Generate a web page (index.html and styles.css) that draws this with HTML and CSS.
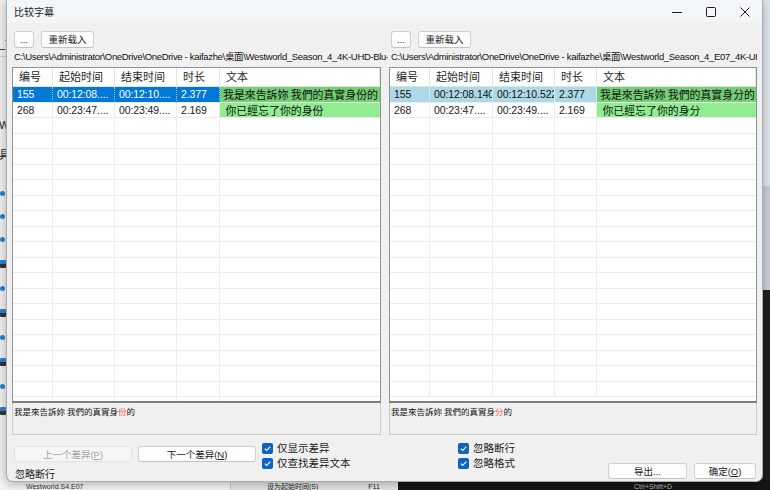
FILE: index.html
```html
<!DOCTYPE html>
<html lang="zh-CN">
<head>
<meta charset="utf-8">
<title>比较字幕</title>
<link rel="stylesheet" href="styles.css">
</head>
<body>
<div class="bg-left">
  <div class="bg-frag t1">_T</div>
  <div class="bg-sep"></div>
  <div class="bg-frag t2">W</div>
  <div class="bg-frag t3">具</div>
  <div class="bg-ico"></div>
  <div class="bg-ico"></div>
  <div class="bg-ico"></div>
  <div class="bg-ico st"></div>
  <div class="bg-ico"></div>
  <div class="bg-ico st"></div>
  <div class="bg-ico"></div>
  <div class="bg-ico st"></div>
  <div class="bg-ico"></div>
  <div class="bg-ico st"></div>
</div>
<div class="bg-right"></div>
<div class="bg-bottom">
  <div class="bb1">Westworld.S4.E07</div>
  <div class="bb2"><span>设为起始时间(S)</span><span class="f11">F11</span></div>
  <div class="bb3"><span>Ctrl+Shift+D</span></div>
</div>

<div class="win">
  <div class="titlebar">
    <div class="title">比较字幕</div>
    <div class="controls">
      <div class="ctl"><svg width="10" height="10" viewBox="0 0 10 10"><path d="M0 5.5h10" stroke="#1b1b1b" stroke-width="1"/></svg></div>
      <div class="ctl"><svg width="10" height="10" viewBox="0 0 10 10"><rect x="0.5" y="0.5" width="9" height="9" rx="1" fill="none" stroke="#1b1b1b" stroke-width="1"/></svg></div>
      <div class="ctl"><svg width="10" height="10" viewBox="0 0 10 10"><path d="M0.5 0.5L9.5 9.5M9.5 0.5L0.5 9.5" stroke="#1b1b1b" stroke-width="1"/></svg></div>
    </div>
  </div>

  <div class="panes">
    <div class="pane">
      <div class="toolbar">
        <button class="btn dots">...</button>
        <button class="btn reload">重新载入</button>
      </div>
      <div class="path">C:\Users\Administrator\OneDrive\OneDrive - kaifazhe\桌面\Westworld_Season_4_4K-UHD-Blu-ray_</div>
      <div class="table left">
        <div class="row head">
          <div class="c">编号</div><div class="c">起始时间</div><div class="c">结束时间</div><div class="c">时长</div><div class="c">文本</div>
        </div>
        <div class="row sel-focus">
          <div class="c n">155</div><div class="c n">00:12:08....</div><div class="c n">00:12:10....</div><div class="c n">2.377</div><div class="c t diff1">我是來告訴妳 我們的真實身份的</div>
        </div>
        <div class="row">
          <div class="c n">268</div><div class="c n">00:23:47....</div><div class="c n">00:23:49....</div><div class="c n">2.169</div><div class="c t diff2">&nbsp;你已經忘了你的身份</div>
        </div>
        <div class="row"><div class="c"></div><div class="c"></div><div class="c"></div><div class="c"></div><div class="c"></div></div>
        <div class="row"><div class="c"></div><div class="c"></div><div class="c"></div><div class="c"></div><div class="c"></div></div>
        <div class="row"><div class="c"></div><div class="c"></div><div class="c"></div><div class="c"></div><div class="c"></div></div>
        <div class="row"><div class="c"></div><div class="c"></div><div class="c"></div><div class="c"></div><div class="c"></div></div>
        <div class="row"><div class="c"></div><div class="c"></div><div class="c"></div><div class="c"></div><div class="c"></div></div>
        <div class="row"><div class="c"></div><div class="c"></div><div class="c"></div><div class="c"></div><div class="c"></div></div>
        <div class="row"><div class="c"></div><div class="c"></div><div class="c"></div><div class="c"></div><div class="c"></div></div>
        <div class="row"><div class="c"></div><div class="c"></div><div class="c"></div><div class="c"></div><div class="c"></div></div>
        <div class="row"><div class="c"></div><div class="c"></div><div class="c"></div><div class="c"></div><div class="c"></div></div>
        <div class="row"><div class="c"></div><div class="c"></div><div class="c"></div><div class="c"></div><div class="c"></div></div>
        <div class="row"><div class="c"></div><div class="c"></div><div class="c"></div><div class="c"></div><div class="c"></div></div>
        <div class="row"><div class="c"></div><div class="c"></div><div class="c"></div><div class="c"></div><div class="c"></div></div>
        <div class="row"><div class="c"></div><div class="c"></div><div class="c"></div><div class="c"></div><div class="c"></div></div>
        <div class="row"><div class="c"></div><div class="c"></div><div class="c"></div><div class="c"></div><div class="c"></div></div>
        <div class="row"><div class="c"></div><div class="c"></div><div class="c"></div><div class="c"></div><div class="c"></div></div>
        <div class="row"><div class="c"></div><div class="c"></div><div class="c"></div><div class="c"></div><div class="c"></div></div>
        <div class="row"><div class="c"></div><div class="c"></div><div class="c"></div><div class="c"></div><div class="c"></div></div>
        <div class="row"><div class="c"></div><div class="c"></div><div class="c"></div><div class="c"></div><div class="c"></div></div>
        <div class="row"><div class="c"></div><div class="c"></div><div class="c"></div><div class="c"></div><div class="c"></div></div>
      </div>
      <div class="preview">我是來告訴妳 我們的真實身<span class="red">份</span>的</div>
    </div>

    <div class="pane">
      <div class="toolbar">
        <button class="btn dots">...</button>
        <button class="btn reload">重新载入</button>
      </div>
      <div class="path">C:\Users\Administrator\OneDrive\OneDrive - kaifazhe\桌面\Westworld_Season_4_E07_4K-UHD-Blu</div>
      <div class="table right">
        <div class="row head">
          <div class="c">编号</div><div class="c">起始时间</div><div class="c">结束时间</div><div class="c">时长</div><div class="c">文本</div>
        </div>
        <div class="row sel-blur">
          <div class="c n">155</div><div class="c n clip">00:12:08.140</div><div class="c n clip">00:12:10.522</div><div class="c n">2.377</div><div class="c t diff1">我是來告訴妳 我們的真實身分的</div>
        </div>
        <div class="row">
          <div class="c n">268</div><div class="c n">00:23:47....</div><div class="c n">00:23:49....</div><div class="c n">2.169</div><div class="c t diff2">&nbsp;你已經忘了你的身分</div>
        </div>
        <div class="row"><div class="c"></div><div class="c"></div><div class="c"></div><div class="c"></div><div class="c"></div></div>
        <div class="row"><div class="c"></div><div class="c"></div><div class="c"></div><div class="c"></div><div class="c"></div></div>
        <div class="row"><div class="c"></div><div class="c"></div><div class="c"></div><div class="c"></div><div class="c"></div></div>
        <div class="row"><div class="c"></div><div class="c"></div><div class="c"></div><div class="c"></div><div class="c"></div></div>
        <div class="row"><div class="c"></div><div class="c"></div><div class="c"></div><div class="c"></div><div class="c"></div></div>
        <div class="row"><div class="c"></div><div class="c"></div><div class="c"></div><div class="c"></div><div class="c"></div></div>
        <div class="row"><div class="c"></div><div class="c"></div><div class="c"></div><div class="c"></div><div class="c"></div></div>
        <div class="row"><div class="c"></div><div class="c"></div><div class="c"></div><div class="c"></div><div class="c"></div></div>
        <div class="row"><div class="c"></div><div class="c"></div><div class="c"></div><div class="c"></div><div class="c"></div></div>
        <div class="row"><div class="c"></div><div class="c"></div><div class="c"></div><div class="c"></div><div class="c"></div></div>
        <div class="row"><div class="c"></div><div class="c"></div><div class="c"></div><div class="c"></div><div class="c"></div></div>
        <div class="row"><div class="c"></div><div class="c"></div><div class="c"></div><div class="c"></div><div class="c"></div></div>
        <div class="row"><div class="c"></div><div class="c"></div><div class="c"></div><div class="c"></div><div class="c"></div></div>
        <div class="row"><div class="c"></div><div class="c"></div><div class="c"></div><div class="c"></div><div class="c"></div></div>
        <div class="row"><div class="c"></div><div class="c"></div><div class="c"></div><div class="c"></div><div class="c"></div></div>
        <div class="row"><div class="c"></div><div class="c"></div><div class="c"></div><div class="c"></div><div class="c"></div></div>
        <div class="row"><div class="c"></div><div class="c"></div><div class="c"></div><div class="c"></div><div class="c"></div></div>
        <div class="row"><div class="c"></div><div class="c"></div><div class="c"></div><div class="c"></div><div class="c"></div></div>
      </div>
      <div class="preview">我是來告訴妳 我們的真實身<span class="red">分</span>的</div>
    </div>
  </div>

  <div class="footer">
    <div class="fcol-a">
      <div class="nav">
        <button class="btn nav-btn" disabled>上一个差异(<u>P</u>)</button>
        <button class="btn nav-btn">下一个差异(<u>N</u>)</button>
      </div>
      <div class="flabel">忽略断行</div>
    </div>
    <div class="fcol-b">
      <label class="chk"><span class="box"><svg width="9" height="9" viewBox="0 0 9 9"><path d="M1.8 4.6L3.7 6.4L7.3 2.6" fill="none" stroke="#fff" stroke-width="1.1"/></svg></span>仅显示差异</label>
      <label class="chk"><span class="box"><svg width="9" height="9" viewBox="0 0 9 9"><path d="M1.8 4.6L3.7 6.4L7.3 2.6" fill="none" stroke="#fff" stroke-width="1.1"/></svg></span>仅查找差异文本</label>
    </div>
    <div class="fcol-c">
      <label class="chk"><span class="box"><svg width="9" height="9" viewBox="0 0 9 9"><path d="M1.8 4.6L3.7 6.4L7.3 2.6" fill="none" stroke="#fff" stroke-width="1.1"/></svg></span>忽略断行</label>
      <label class="chk"><span class="box"><svg width="9" height="9" viewBox="0 0 9 9"><path d="M1.8 4.6L3.7 6.4L7.3 2.6" fill="none" stroke="#fff" stroke-width="1.1"/></svg></span>忽略格式</label>
    </div>
    <div class="fcol-d">
      <button class="btn export">导出...</button>
      <button class="btn ok">确定(<u>O</u>)</button>
    </div>
  </div>
</div>
</body>
</html>
```
FILE: styles.css
```css
* { box-sizing: border-box; }
html, body {
  margin: 0;
  width: 770px;
  height: 490px;
  overflow: hidden;
}
body {
  position: relative;
  background: #dde3ea;
  font-family: "Liberation Sans", "Noto Sans CJK SC", sans-serif;
  color: #1a1a1a;
}

/* ---------- background application ---------- */
.bg-left {
  position: absolute;
  left: 0; top: 0;
  width: 12px; height: 490px;
  background: #eeeeee;
  border-right: 1px solid #d6d6d6;
  display: flex;
  flex-direction: column;
  align-items: flex-start;
  padding-top: 38px;
}
.bg-frag { font-size: 11px; line-height: 12px; color: #222; margin-left: -1px; }
.bg-frag.t1 { margin-bottom: 6px; }
.bg-sep { width: 12px; height: 1px; background: #cfcfcf; margin-bottom: 62px; }
.bg-frag.t2 { margin-bottom: 18px; }
.bg-frag.t3 { margin-bottom: 30px; }
.bg-ico {
  width: 5px; height: 5px;
  border-radius: 50%;
  background: #2a7fd4;
  margin-bottom: 18px;
}
.bg-ico.st {
  width: 6px; height: 8px; border-radius: 1px;
  background: linear-gradient(#2a7fd4 0 4px, #333 4px);
}
.bg-right {
  position: absolute;
  right: 0; top: 0;
  width: 12px; height: 490px;
  background: linear-gradient(#dfe5ec 0 186px, #c9ced4 186px 290px, #1e1e1e 290px);
}
.bg-bottom {
  position: absolute;
  left: 0; bottom: 0;
  width: 770px; height: 10px;
  display: flex;
  font-size: 7px;
  line-height: 7px;
}
.bb1 { width: 230px; background: #f2f2f2; padding: 3px 0 0 26px; color: #333; overflow: hidden; white-space: nowrap; }
.bb2 { width: 168px; background: #e4e4e4; border-left: 1px solid #ccc; padding: 3px 0 0 36px; display: flex; gap: 50px; color: #222; white-space: nowrap; overflow: hidden; }
.bb3 { flex: 1; background: #151515; color: #bbb; padding: 3px 0 0 236px; white-space: nowrap; overflow: hidden; }

/* ---------- dialog window ---------- */
.win {
  position: absolute;
  left: 6px; top: 0;
  width: 757px; height: 482px;
  background: #f0f0f0;
  border: 1px solid #a9adb3;
  border-top: none;
  border-radius: 0 0 7px 7px;
  box-shadow: 0 2px 10px rgba(0,0,0,0.28);
  display: flex;
  flex-direction: column;
  overflow: hidden;
}
.titlebar {
  height: 23px;
  flex: none;
  background: #f3f6f9;
  display: flex;
  align-items: center;
}
.title {
  padding-left: 7px;
  font-size: 10px;
  color: #1a1a1a;
  flex: 1;
}
.controls { display: flex; height: 23px; margin-right: 0; }
.ctl {
  width: 34px;
  display: flex;
  align-items: center;
  justify-content: center;
}

/* ---------- panes ---------- */
.panes {
  display: flex;
  gap: 8px;
  padding: 0 5px 0 5px;
  flex: none;
}
.pane {
  display: flex;
  flex-direction: column;
}
.pane:first-child { width: 369px; }
.pane:last-child { width: 369px; }

.toolbar {
  display: flex;
  gap: 7px;
  margin: 8px 0 0 2px;
  height: 17px;
}
.btn {
  font-family: "Liberation Sans", "Noto Sans CJK SC", sans-serif;
  font-size: 9.5px;
  color: #1a1a1a;
  background: #fdfdfd;
  border: 1px solid #d0d0d0;
  border-bottom-color: #c2c2c2;
  border-radius: 3px;
  padding: 0;
  height: 17px;
  line-height: 14px;
  text-align: center;
}
.btn u { text-decoration: underline; }
.btn.dots { width: 20px; }
.btn.reload { width: 53px; }

.path {
  margin: 3px 0 0 2px;
  width: 374px;
  height: 12px;
  font-size: 9.5px;
  line-height: 12px;
  letter-spacing: -0.32px;
  white-space: nowrap;
  overflow: hidden;
  color: #111;
}
.pane:last-child .path { width: 366px; }

.table {
  margin-top: 4px;
  height: 336px;
  background: #ffffff;
  border: 1px solid #8e9297;
  border-bottom: 2px solid #7d8086;
  overflow: hidden;
}
.row {
  display: grid;
  height: 15.5px;
}
.table.left .row { grid-template-columns: 40px 62px 62px 43px 1fr; }
.table.right .row { grid-template-columns: 40px 63px 62px 42px 1fr; }
.c {
  border-right: 1px solid #ececec;
  border-bottom: 1px solid #ececec;
  overflow: hidden;
  white-space: nowrap;
  padding-left: 4px;
  font-size: 10px;
  line-height: 14px;
}
.c:last-child { border-right: none; }
.row.head { height: 19px; }
.row.head .c {
  font-size: 11px;
  line-height: 18px;
  padding-left: 6px;
  color: #1f1f1f;
  border-right: 1px solid #e3e3e3;
  border-bottom: 1px solid #e3e3e3;
}
.c.n { font-size: 10.5px; letter-spacing: -0.1px; padding-left: 4px; }
.c.t {
  font-family: "Noto Sans CJK TC", "Noto Sans CJK SC", sans-serif;
  font-size: 10.9px;
  line-height: 14px;
  padding-left: 3px;
  color: #111;
}
.c.diff1 { background: #74ce74; }
.c.diff2 { background: #90ee90; }
.row.sel-focus .c:not(.t) {
  background: #0078d7;
  color: #ffffff;
  border-right: 1px dotted #9cc8ef;
}
.row.sel-blur .c:not(.t) {
  background: #add8e6;
  color: #111;
  border-right-color: #d4ecf4;
}
.c.clip { text-overflow: clip; }

.preview {
  height: 32px;
  background: #f0f0f0;
  border: 1px solid #c8c8c8;
  border-top: none;
  font-family: "Noto Sans CJK TC", "Noto Sans CJK SC", sans-serif;
  font-size: 8.5px;
  line-height: 16px;
  padding-left: 1px;
  color: #111;
}
.red { color: #f35b5b; }

/* ---------- footer ---------- */
.footer {
  flex: 1;
  display: flex;
  padding: 7px 0 0 7px;
}
.fcol-a {
  width: 248px;
  display: flex;
  flex-direction: column;
}
.nav {
  display: flex;
  gap: 6px;
  margin-top: 4px;
}
.nav-btn { width: 118px; height: 16px; line-height: 13px; }
.nav-btn:disabled {
  background: #f6f6f6;
  color: #a3a3a3;
  border-color: #e2e2e2;
}
.flabel {
  margin-top: 7px;
  font-size: 10px;
  line-height: 12px;
  padding-left: 1px;
}
.fcol-b {
  width: 196px;
  display: flex;
  flex-direction: column;
  gap: 3px;
}
.fcol-c {
  width: 150px;
  display: flex;
  flex-direction: column;
  gap: 3px;
}
.chk {
  display: flex;
  align-items: center;
  gap: 4px;
  font-size: 10.5px;
  line-height: 12px;
  height: 12px;
}
.box {
  width: 11px; height: 11px;
  border-radius: 2px;
  background: #0a64c0;
  display: flex;
  align-items: center;
  justify-content: center;
}
.fcol-d {
  display: flex;
  gap: 7px;
  padding-top: 21px;
}
.btn.export { width: 79px; height: 16px; line-height: 13px; }
.btn.ok { width: 62px; height: 16px; line-height: 13px; }
```
